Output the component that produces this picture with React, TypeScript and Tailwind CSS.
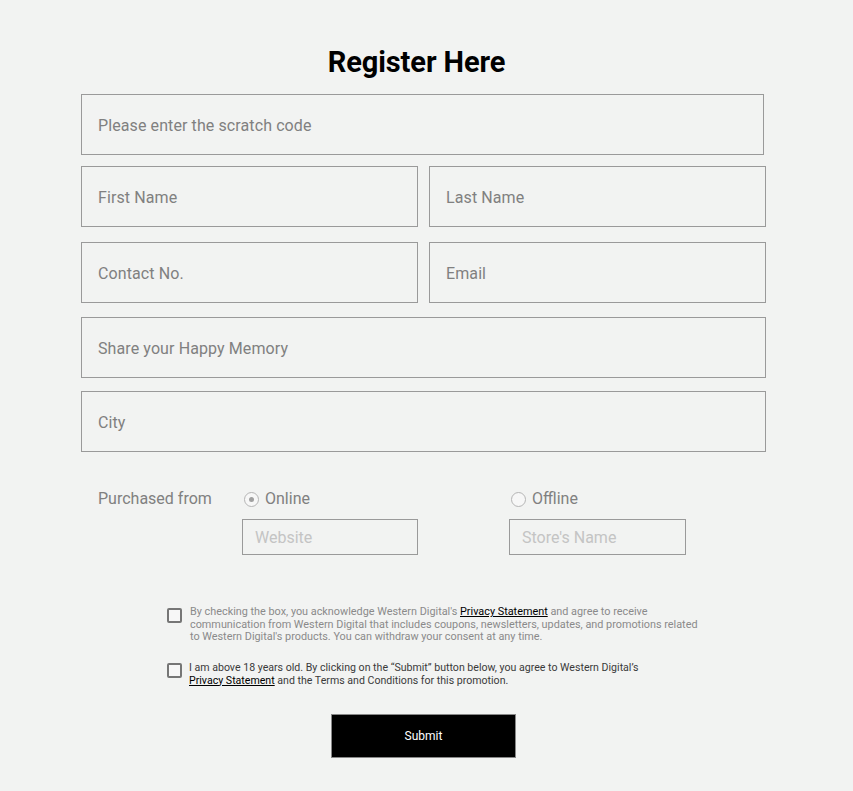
import React from "react";

const font = { fontFamily: "Roboto, 'Liberation Sans', sans-serif" };

function Field({ placeholder, className = "" }: { placeholder: string; className?: string }) {
  return (
    <input
      placeholder={placeholder}
      className={`h-[61px] border border-[#9a9a9a] bg-transparent pl-[16px] pt-[1px] text-[16px] tracking-[0.1px] text-[#555] outline-none placeholder:text-[#808080] ${className}`}
    />
  );
}

function Radio({ checked, label }: { checked?: boolean; label: string }) {
  return (
    <label className="flex items-center gap-[6px] text-[16px] leading-[20px] text-[#808080]">
      <span className="flex h-[15px] w-[15px] items-center justify-center rounded-full border border-[#b5b5b5] bg-[#f7f7f7]">
        {checked && <span className="h-[5px] w-[5px] rounded-full bg-[#a0a0a0]" />}
      </span>
      {label}
    </label>
  );
}

function Box() {
  return <span className="mt-[2px] h-[15px] w-[15px] shrink-0 rounded-[2px] border-2 border-[#767676] bg-[#f7f7f7]" />;
}

export default function App() {
  return (
    <div className="min-h-[791px] w-full bg-[#f2f3f2]" style={font}>
      <div className="ml-[81px] flex w-[685px] flex-col pt-[45px]">
        <h1 className="pr-[14px] text-center text-[29px] font-bold leading-[34px] tracking-[-0.1px] text-black">
          Register Here
        </h1>
        <Field placeholder="Please enter the scratch code" className="mt-[15px] w-[683px]" />
        <div className="mt-[11px] flex gap-[11px]">
          <Field placeholder="First Name" className="w-[337px]" />
          <Field placeholder="Last Name" className="w-[337px]" />
        </div>
        <div className="mt-[15px] flex gap-[11px]">
          <Field placeholder="Contact No." className="w-[337px]" />
          <Field placeholder="Email" className="w-[337px]" />
        </div>
        <Field placeholder="Share your Happy Memory" className="mt-[14px] w-[685px]" />
        <Field placeholder="City" className="mt-[13px] w-[685px]" />

        <div className="mt-[37px] flex">
          <div className="w-[161px] pl-[17px] text-[16px] leading-[20px] text-[#808080]">Purchased from</div>
          <div className="flex w-[267px] flex-col">
            <div className="h-[20px] pl-[2px]">
              <Radio checked label="Online" />
            </div>
            <input
              placeholder="Website"
              className="mt-[10px] h-[36px] w-[176px] border border-[#9a9a9a] bg-transparent pl-[12px] text-[16px] outline-none placeholder:text-[#c4c4c4]"
            />
          </div>
          <div className="flex flex-col">
            <div className="h-[20px] pl-[2px]">
              <Radio label="Offline" />
            </div>
            <input
              placeholder="Store's Name"
              className="mt-[10px] h-[36px] w-[177px] border border-[#9a9a9a] bg-transparent pl-[12px] text-[16px] outline-none placeholder:text-[#c4c4c4]"
            />
          </div>
        </div>

        <div className="ml-[86px] mt-[51px] flex gap-[8px]">
          <Box />
          <p className="text-[10.85px] leading-[12.5px] text-[#8a8a8a]">
            By checking the box, you acknowledge Western Digital's{" "}
            <span className="text-black underline">Privacy Statement</span> and agree to receive
            <br />
            communication from Western Digital that includes coupons, newsletters, updates, and promotions related
            <br />
            to Western Digital's products. You can withdraw your consent at any time.
          </p>
        </div>
        <div className="ml-[86px] mt-[17px] flex gap-[7px]">
          <Box />
          <p className="text-[10.6px] leading-[13px] text-[#3a3a3a]">
            I am above 18 years old. By clicking on the “Submit” button below, you agree to Western Digital’s
            <br />
            <span className="text-black underline">Privacy Statement</span> and the Terms and Conditions for this
            promotion.
          </p>
        </div>
        <div className="ml-[250px] mt-[27px]">
          <button className="h-[44px] w-[185px] border border-[#888] bg-black text-[12px] text-white">Submit</button>
        </div>
      </div>
    </div>
  );
}
